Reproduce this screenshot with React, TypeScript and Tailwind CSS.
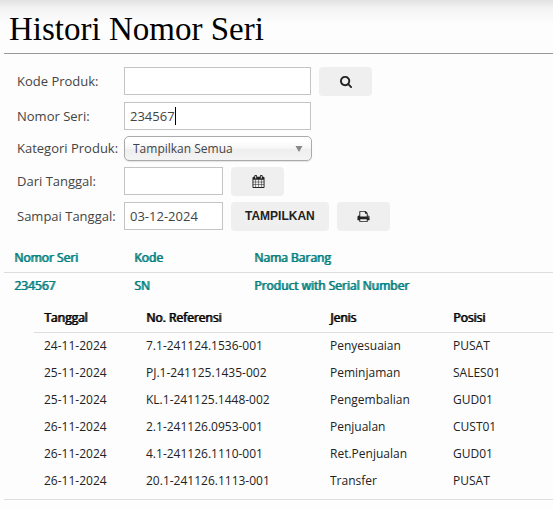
import { useState } from 'react';
import type { ReactNode } from 'react';

type HistoryRow = { tanggal: string; ref: string; jenis: string; posisi: string };

const ROWS: HistoryRow[] = [
  { tanggal: '24-11-2024', ref: '7.1-241124.1536-001', jenis: 'Penyesuaian', posisi: 'PUSAT' },
  { tanggal: '25-11-2024', ref: 'PJ.1-241125.1435-002', jenis: 'Peminjaman', posisi: 'SALES01' },
  { tanggal: '25-11-2024', ref: 'KL.1-241125.1448-002', jenis: 'Pengembalian', posisi: 'GUD01' },
  { tanggal: '26-11-2024', ref: '2.1-241126.0953-001', jenis: 'Penjualan', posisi: 'CUST01' },
  { tanggal: '26-11-2024', ref: '4.1-241126.1110-001', jenis: 'Ret.Penjualan', posisi: 'GUD01' },
  { tanggal: '26-11-2024', ref: '20.1-241126.1113-001', jenis: 'Transfer', posisi: 'PUSAT' },
];

const ICONS = {
  search:
    'M1152 832q0-185-131.5-316.5t-316.5-131.5-316.5 131.5-131.5 316.5 131.5 316.5 316.5 131.5 316.5-131.5 131.5-316.5zm512 832q0 52-38 90t-90 38q-54 0-90-38l-343-342q-179 124-399 124-143 0-273.5-55.5t-225-150-150-225-55.5-273.5 55.5-273.5 150-225 225-150 273.5-55.5 273.5 55.5 225 150 150 225 55.5 273.5q0 220-124 399l343 343q37 37 37 90z',
  calendar:
    'M192 1664h288v-288h-288v288zm352 0h320v-288h-320v288zm-352-352h288v-320h-288v320zm352 0h320v-320h-320v320zm-352-384h288v-288h-288v288zm736 736h320v-288h-320v288zm-384-736h320v-288h-320v288zm768 736h288v-288h-288v288zm-384-352h320v-320h-320v320zm-352-864v-288q0-13-9.5-22.5t-22.5-9.5h-64q-13 0-22.5 9.5t-9.5 22.5v288q0 13 9.5 22.5t22.5 9.5h64q13 0 22.5-9.5t9.5-22.5zm736 864h288v-320h-288v320zm-384-384h320v-288h-320v288zm384 0h288v-288h-288v288zm32-480v-288q0-13-9.5-22.5t-22.5-9.5h-64q-13 0-22.5 9.5t-9.5 22.5v288q0 13 9.5 22.5t22.5 9.5h64q13 0 22.5-9.5t9.5-22.5zm384-64v1280q0 52-38 90t-90 38h-1408q-52 0-90-38t-38-90v-1280q0-52 38-90t90-38h128v-96q0-66 47-113t113-47h64q66 0 113 47t47 113v96h384v-96q0-66 47-113t113-47h64q66 0 113 47t47 113v96h128q52 0 90 38t38 90z',
  print:
    'M448 1536h896v-256h-896v256zm0-640h896v-384h-160q-40 0-68-28t-28-68v-160h-640v640zm1152 64q0-26-19-45t-45-19-45 19-19 45 19 45 45 19 45-19 19-45zm128 0v416q0 13-9.5 22.5t-22.5 9.5h-224v160q0 40-28 68t-68 28h-960q-40 0-68-28t-28-68v-160h-224q-13 0-22.5-9.5t-9.5-22.5v-416q0-79 56.5-135.5t135.5-56.5h64v-544q0-40 28-68t68-28h672q40 0 88 20t76 48l152 152q28 28 48 76t20 88v256h64q79 0 135.5 56.5t56.5 135.5z',
};

const inputClass = 'h-7 border border-[#c4c4c4] bg-white px-[5px] text-[13px] text-[#444] outline-none';
const buttonClass = 'flex h-[29px] items-center justify-center rounded bg-[#efefef] text-[#222]';
const headClass = 'pl-[10px] font-normal [text-shadow:1px_0_0_currentColor]';

function IconButton({ icon, label }: { icon: keyof typeof ICONS; label: string }) {
  return (
    <button type="button" aria-label={label} className={`${buttonClass} w-[53px] pb-px pl-px`}>
      <svg viewBox="0 0 1792 1792" className="size-[13px]" fill="currentColor">
        <path d={ICONS[icon]} />
      </svg>
    </button>
  );
}

function Field({ id, label, children }: { id: string; label: string; children: ReactNode }) {
  return (
    <div className="flex items-center">
      <label htmlFor={id} className="w-[107px] shrink-0 whitespace-nowrap pb-px">{label}</label>
      <div className="flex items-start gap-2">{children}</div>
    </div>
  );
}

export default function App() {
  const [kode, setKode] = useState('');
  const [seri, setSeri] = useState('234567');
  const [dari, setDari] = useState('');
  const [sampai, setSampai] = useState('03-12-2024');

  return (
    <main className="min-h-screen bg-[#fdfdfd] bg-[linear-gradient(#e2e2e2,#f3f3f3_8px,#fdfdfd_24px)] bg-no-repeat pb-2 pl-1 font-['Open_Sans',sans-serif] text-[13px] leading-[18px] text-[#444]">
      <h1 className="h-[54px] border-b border-[#999] pt-[9px] pl-[5px] font-['Liberation_Serif',serif] text-[33px] leading-10 text-black">
        Histori Nomor Seri
      </h1>

      <form className="flex flex-col gap-[6px] pt-[13px] pl-[13px]" onSubmit={(e) => e.preventDefault()}>
        <Field id="kode" label="Kode Produk:">
          <input id="kode" value={kode} onChange={(e) => setKode(e.target.value)} className={`${inputClass} w-[187px]`} />
          <IconButton icon="search" label="Cari produk" />
        </Field>
        <Field id="seri" label="Nomor Seri:">
          <div className="relative">
            <input id="seri" value={seri} onChange={(e) => setSeri(e.target.value)} className={`${inputClass} block w-[187px]`} />
            <span className="absolute top-[5px] left-[51px] h-[18px] w-px bg-black" />
          </div>
        </Field>
        <Field id="kategori" label="Kategori Produk:">
          <div className="relative">
            <select
              id="kategori"
              className="block h-[25px] w-[188px] appearance-none rounded-[5px] border border-[#aaa] bg-[linear-gradient(#fff_20%,#f6f6f6_50%,#eee_52%,#f4f4f4_100%)] pl-2 text-xs text-[#444] shadow-[0_1px_1px_rgba(0,0,0,0.1)] outline-none"
            >
              <option>Tampilkan Semua</option>
            </select>
            <svg viewBox="0 0 8 6" className="pointer-events-none absolute top-[10px] right-[9px] h-[6px] w-2" fill="#888">
              <path d="M0.5 0h7L4 6z" />
            </svg>
          </div>
        </Field>
        <Field id="dari" label="Dari Tanggal:">
          <input id="dari" value={dari} onChange={(e) => setDari(e.target.value)} className={`${inputClass} w-[99px]`} />
          <IconButton icon="calendar" label="Pilih tanggal" />
        </Field>
        <Field id="sampai" label="Sampai Tanggal:">
          <input id="sampai" value={sampai} onChange={(e) => setSampai(e.target.value)} className={`${inputClass} w-[99px]`} />
          <button type="submit" className={`${buttonClass} px-[14px] pb-px font-['Liberation_Sans',sans-serif] text-xs font-bold`}>
            TAMPILKAN
          </button>
          <IconButton icon="print" label="Cetak" />
        </Field>
      </form>

      <table className="mt-[13px] w-full table-fixed border-b border-[#ddd] text-left text-xs text-[#222]">
        <colgroup>
          <col className="w-[120px]" />
          <col className="w-[120px]" />
          <col />
        </colgroup>
        <thead>
          <tr className="h-7 border-b border-[#ddd] text-[#008080]">
            <th className={headClass}>Nomor Seri</th>
            <th className={headClass}>Kode</th>
            <th className={headClass}>Nama Barang</th>
          </tr>
        </thead>
        <tbody>
          <tr className="h-7 text-[#008080]">
            <td className={headClass}>234567</td>
            <td className={headClass}>SN</td>
            <td className={headClass}>Product with Serial Number</td>
          </tr>
          <tr>
            <td colSpan={3} className="pt-1 pb-[5px] pl-[30px]">
              <table className="w-full table-fixed">
                <colgroup>
                  <col className="w-[102px]" />
                  <col className="w-[184px]" />
                  <col className="w-[123px]" />
                  <col />
                </colgroup>
                <thead>
                  <tr className="h-7 border-b border-[#ddd] text-black">
                    <th className={headClass}>Tanggal</th>
                    <th className={headClass}>No. Referensi</th>
                    <th className={headClass}>Jenis</th>
                    <th className={headClass}>Posisi</th>
                  </tr>
                </thead>
                <tbody>
                  {ROWS.map((r) => (
                    <tr key={r.ref} className="h-[27px]">
                      <td className="pl-[10px]">{r.tanggal}</td>
                      <td className="pl-[10px]">{r.ref}</td>
                      <td className="pl-[10px]">{r.jenis}</td>
                      <td className="pl-[10px]">{r.posisi}</td>
                    </tr>
                  ))}
                </tbody>
              </table>
            </td>
          </tr>
        </tbody>
      </table>
    </main>
  );
}
